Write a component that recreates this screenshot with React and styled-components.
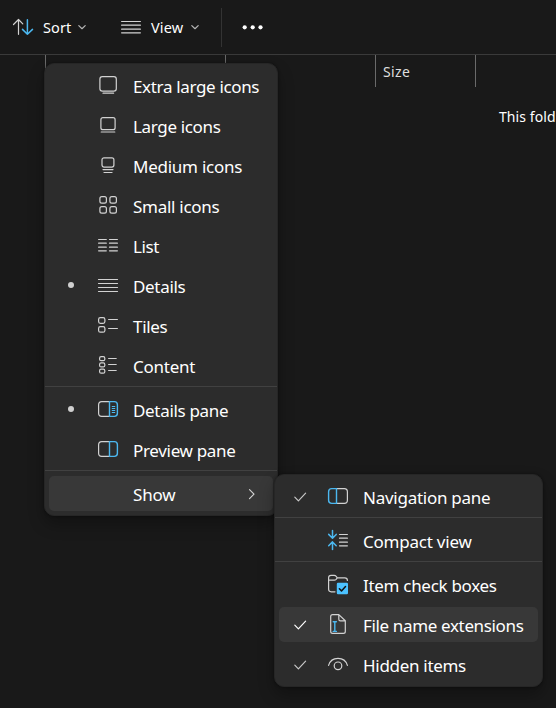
import React from "react";
import styled, { createGlobalStyle } from "styled-components";

const Global = createGlobalStyle`
  * { box-sizing: border-box; }
  html, body { margin: 0; height: 708px; overflow: hidden; background: #191919; }
  body { font-family: "Noto Sans", "Open Sans", sans-serif; color: #fff; }
`;

const Window = styled.main`
  position: relative;
  width: 556px;
  height: 708px;
  overflow: hidden;
  background: #191919;
`;

const Toolbar = styled.header`
  display: flex;
  align-items: center;
  height: 55px;
  padding-left: 12px;
  border-bottom: 1px solid #3a3a3a;
`;

const ToolButton = styled.div`
  display: flex;
  align-items: center;
  width: ${(p) => p.$width}px;
  height: 54px;
`;

const ToolLabel = styled.span`
  width: ${(p) => p.$width}px;
  margin-left: ${(p) => p.$gap}px;
  font-size: 14.5px;
  line-height: 20px;
  letter-spacing: ${(p) => p.$track}px;
  white-space: nowrap;
`;

const ToolDivider = styled.div`
  width: 1px;
  height: 39px;
  margin-right: 20px;
  background: #333;
`;

const Columns = styled.div`
  display: grid;
  grid-template-columns: 45px 180px 150px 100px 81px;
  height: 32px;
`;

const Column = styled.div`
  height: 32px;
  border-left: ${(p) => (p.$first ? "none" : "1px solid #6a6a6a")};
  padding-left: 7px;
  font-size: 14px;
  line-height: 34px;
  letter-spacing: 0.4px;
  color: #dedede;
`;

const EmptyNote = styled.p`
  margin: 20px 0 0 499px;
  font-size: 14px;
  line-height: 20px;
  letter-spacing: 0.08px;
  white-space: nowrap;
`;

const Menu = styled.div`
  position: absolute;
  left: ${(p) => p.$left}px;
  top: ${(p) => p.$top}px;
  display: flex;
  flex-direction: column;
  width: ${(p) => p.$width}px;
  height: ${(p) => p.$height}px;
  padding: 2px 0 0;
  border: 1px solid #262626;
  border-radius: 10px;
  background: #2c2c2c;
  box-shadow: 0 8px 16px rgba(0, 0, 0, 0.3), 0 0 3px rgba(0, 0, 0, 0.45);
`;

const Item = styled.div`
  display: grid;
  flex: none;
  grid-template-columns: 43px 37px 1fr 25px;
  align-items: center;
  height: 35px;
  margin: 2px 4px 3px;
  padding-left: 4px;
  border-radius: 5px;
  background: ${(p) => (p.$active ? "#383838" : "transparent")};
`;

const Separator = styled.div`
  flex: none;
  height: 1px;
  margin-bottom: 3px;
  background: #414141;
`;

const Mark = styled.div`
  display: flex;
  height: 35px;
  align-items: center;
  padding-left: ${(p) => (p.$dot ? 14.5 : 10)}px;
  color: ${(p) => (p.$bright ? "#fff" : "#c8c8c8")};
`;

const Dot = styled.i`
  width: 6px;
  height: 6px;
  margin-bottom: 1px;
  border-radius: 50%;
  background: #d0d0d0;
`;

const Label = styled.span`
  font-size: 17px;
  line-height: 24px;
  letter-spacing: ${(p) => p.$track}px;
  padding-top: 3px;
  white-space: nowrap;
`;

const Glyph = styled.svg`
  display: block;
  flex: none;
  fill: none;
  stroke: ${(p) => p.$color || "#d2d2d2"};
  stroke-width: 1.2;
  stroke-linecap: round;
  stroke-linejoin: round;
`;

const MenuGlyph = styled(Glyph)`
  margin-bottom: 1px;
`;

const BLUE = "#4cb8f0";

const icons = {
  xl: <><rect x="3.9" y="3.6" width="16.4" height="14.6" rx="2.4" /><path d="M7 20.2H17.6" /></>,
  lg: <><rect x="4.9" y="4.7" width="14.2" height="12" rx="2" /><path d="M5.2 19H18.8" /></>,
  md: <><rect x="6" y="4.8" width="11.9" height="9.3" rx="2" /><path d="M7 16.6H17M8 19.5H16" /></>,
  sm: <>{[3.9, 13.9].map((x) => [3.7, 13.7].map((y) => <rect key={`${x}-${y}`} x={x} y={y} width="6.5" height="6.5" rx="1.9" />))}</>,
  list: <path d="M2.6 6.5H10.3M13.5 6.5H21.4M2.6 10.2H10.3M13.5 10.2H21.4M2.6 14.2H10.3M13.5 14.2H21.4M2.6 17.8H10.3M13.5 17.8H21.4" />,
  details: <path d="M2.5 6.5H21.5M2.5 10.5H21.5M2.5 14.5H21.5M2.5 18.5H21.5" />,
  tiles: <><rect x="2.6" y="4.7" width="6.3" height="5.6" rx="1.8" /><rect x="2.6" y="13.6" width="6.3" height="5.6" rx="1.8" /><path d="M12.6 6.5H21.4M12.6 15.5H21.4" /></>,
  content: <><rect x="3.6" y="3.7" width="5.2" height="4" rx="1.5" /><rect x="3.6" y="9.9" width="5.2" height="4" rx="1.5" /><rect x="3.6" y="16.2" width="5.2" height="4" rx="1.5" /><path d="M12.6 5.5H20.2M12.6 11.5H20.2M12.6 17.5H20.2" /></>,
  detailsPane: <><path d="M13 4.6H5.7Q2.6 4.6 2.6 7.7V16.3Q2.6 19.4 5.7 19.4H13" /><path stroke={BLUE} strokeWidth="1.4" d="M13.5 4.6H18.3Q21.4 4.6 21.4 7.7V16.3Q21.4 19.4 18.3 19.4H13.5Z" /><path stroke={BLUE} strokeWidth="1" strokeLinecap="butt" d="M15.8 9.5H19.2M15.8 11.5H19.2M15.8 13.5H19.2M15.8 15.5H19.2" /></>,
  previewPane: <><path d="M13 4.6H5.7Q2.6 4.6 2.6 7.7V16.3Q2.6 19.4 5.7 19.4H13" /><path stroke={BLUE} strokeWidth="1.4" d="M13.5 4.6H18.3Q21.4 4.6 21.4 7.7V16.3Q21.4 19.4 18.3 19.4H13.5Z" /></>,
  navPane: <><path d="M10.8 4.6H18.3Q21.4 4.6 21.4 7.7V16.3Q21.4 19.4 18.3 19.4H10.8" /><path stroke={BLUE} strokeWidth="1.4" d="M10.5 4.6H5.7Q2.6 4.6 2.6 7.7V16.3Q2.6 19.4 5.7 19.4H10.5Z" /></>,
  compact: <><path stroke={BLUE} strokeWidth="1.5" d="M6.5 2.5V10M2.7 6.4L6.5 10.2L10.2 6.4M6.5 21.5V14M2.7 17.7L6.5 13.9L10.2 17.7" /><path d="M13.5 6.5H21.4M13.5 10.2H21.4M13.5 14.2H21.4M13.5 17.8H21.4" /></>,
  checkBoxes: <><path d="M9 19.8H5.2Q2.6 19.8 2.6 17.2V5.8Q2.6 3.4 5 3.4H8.2Q9.4 3.4 10 4.2L11.3 5.8H18.8Q21.4 5.8 21.4 8.4M2.6 8.2H8.3Q9.4 8.2 10.1 7.4L11.3 5.8" /><rect x="10.8" y="10.8" width="11.2" height="11.4" rx="1.2" fill="#4cc2ff" stroke="none" /><path stroke="#111" strokeWidth="1.5" d="M13.4 16.8L15.5 18.9L19.5 14.6" /></>,
  fileExt: <><path d="M12.8 2.6H6.6Q4.7 2.6 4.7 4.5V19.4Q4.7 21.3 6.6 21.3H17.4Q19.3 21.3 19.3 19.4V8.8L12.8 2.6V7.2Q12.8 8.8 14.4 8.8H19.3" /><path stroke={BLUE} strokeWidth="1.4" d="M7.2 9.8H10.4M8.8 9.8V19.4M7.2 19.4H10.4" /></>,
  eye: <><path d="M2.6 13.4C3.9 8.9 7.6 6.4 12 6.4S20.1 8.9 21.4 13.4" /><circle cx="12" cy="13.8" r="3.8" /></>,
};

const viewEntries = [
  { icon: "xl", text: "Extra large icons", track: -0.34 },
  { icon: "lg", text: "Large icons", track: -0.34 },
  { icon: "md", text: "Medium icons", track: -0.25 },
  { icon: "sm", text: "Small icons", track: -0.28 },
  { icon: "list", text: "List", track: -0.4 },
  { icon: "details", text: "Details", dot: true, track: -0.32 },
  { icon: "tiles", text: "Tiles", track: -0.3 },
  { icon: "content", text: "Content", track: -0.26 },
  null,
  { icon: "detailsPane", text: "Details pane", dot: true, track: -0.32 },
  { icon: "previewPane", text: "Preview pane", track: -0.32 },
  null,
  { text: "Show", active: true, arrow: true, track: -0.15 },
];

const showEntries = [
  { icon: "navPane", text: "Navigation pane", check: true, track: -0.26 },
  null,
  { icon: "compact", text: "Compact view", track: -0.22 },
  null,
  { icon: "checkBoxes", text: "Item check boxes", track: -0.3 },
  { icon: "fileExt", text: "File name extensions", check: true, active: true, track: -0.35 },
  { icon: "eye", text: "Hidden items", check: true, track: -0.3 },
];

function Entries({ items }) {
  return items.map((e, i) =>
    e ? (
      <Item key={i} $active={e.active}>
        <Mark $dot={e.dot} $bright={e.active}>
          {e.dot && <Dot />}
          {e.check && (
            <Glyph width="14" height="14" viewBox="0 0 14 14" $color="currentColor">
              <path d="M1.8 7.2L5.4 10.8L12.6 3.2" />
            </Glyph>
          )}
        </Mark>
        <div>
          {e.icon && <MenuGlyph width="24" height="24" viewBox="0 0 24 24">{icons[e.icon]}</MenuGlyph>}
        </div>
        <Label $track={e.track}>{e.text}</Label>
        {e.arrow && (
          <Glyph width="12" height="14" viewBox="0 0 12 14">
            <path d="M1.5 2.6L6 7.1L1.5 11.6" />
          </Glyph>
        )}
      </Item>
    ) : (
      <Separator key={i} />
    )
  );
}

const Chevron = () => (
  <Glyph width="10" height="8" viewBox="0 0 10 8" $color="#b5b5b5">
    <path d="M1.8 2.6L5 5.7L8.2 2.6" />
  </Glyph>
);

export default function App() {
  return (
    <Window>
      <Global />
      <Toolbar>
        <ToolButton $width={108}>
          <Glyph width="22" height="20" viewBox="0 0 22 20">
            <path d="M6.5 17.3V2.8M1.5 7.5L6.5 2.5L10.8 6.8" />
            <path stroke={BLUE} strokeWidth="1.5" d="M15.4 2.8V17.2M10.5 12.4L15.4 17.3L20.5 12.4" />
          </Glyph>
          <ToolLabel $gap={9} $width={34} $track={0.1}>Sort</ToolLabel>
          <Chevron />
        </ToolButton>
        <ToolButton $width={101}>
          <Glyph width="22" height="18" viewBox="0 0 22 18">
            <path d="M1.6 3.5H20.4M1.6 7.2H20.4M1.6 11.2H20.4M1.6 14.8H20.4" />
          </Glyph>
          <ToolLabel $gap={9} $width={39} $track={0.1}>View</ToolLabel>
          <Chevron />
        </ToolButton>
        <ToolDivider />
        <Glyph width="22" height="8" viewBox="0 0 22 8">
          <g fill="#fff" stroke="none">
            <circle cx="2.7" cy="4.3" r="2.1" />
            <circle cx="10.7" cy="4.3" r="2.1" />
            <circle cx="18.5" cy="4.3" r="2.1" />
          </g>
        </Glyph>
      </Toolbar>
      <Columns>
        <Column $first />
        <Column />
        <Column />
        <Column>Size</Column>
        <Column />
      </Columns>
      <EmptyNote>This fold</EmptyNote>
      <Menu $left={44} $top={63} $width={234} $height={453}>
        <Entries items={viewEntries} />
      </Menu>
      <Menu $left={274} $top={474} $width={269} $height={213}>
        <Entries items={showEntries} />
      </Menu>
    </Window>
  );
}
